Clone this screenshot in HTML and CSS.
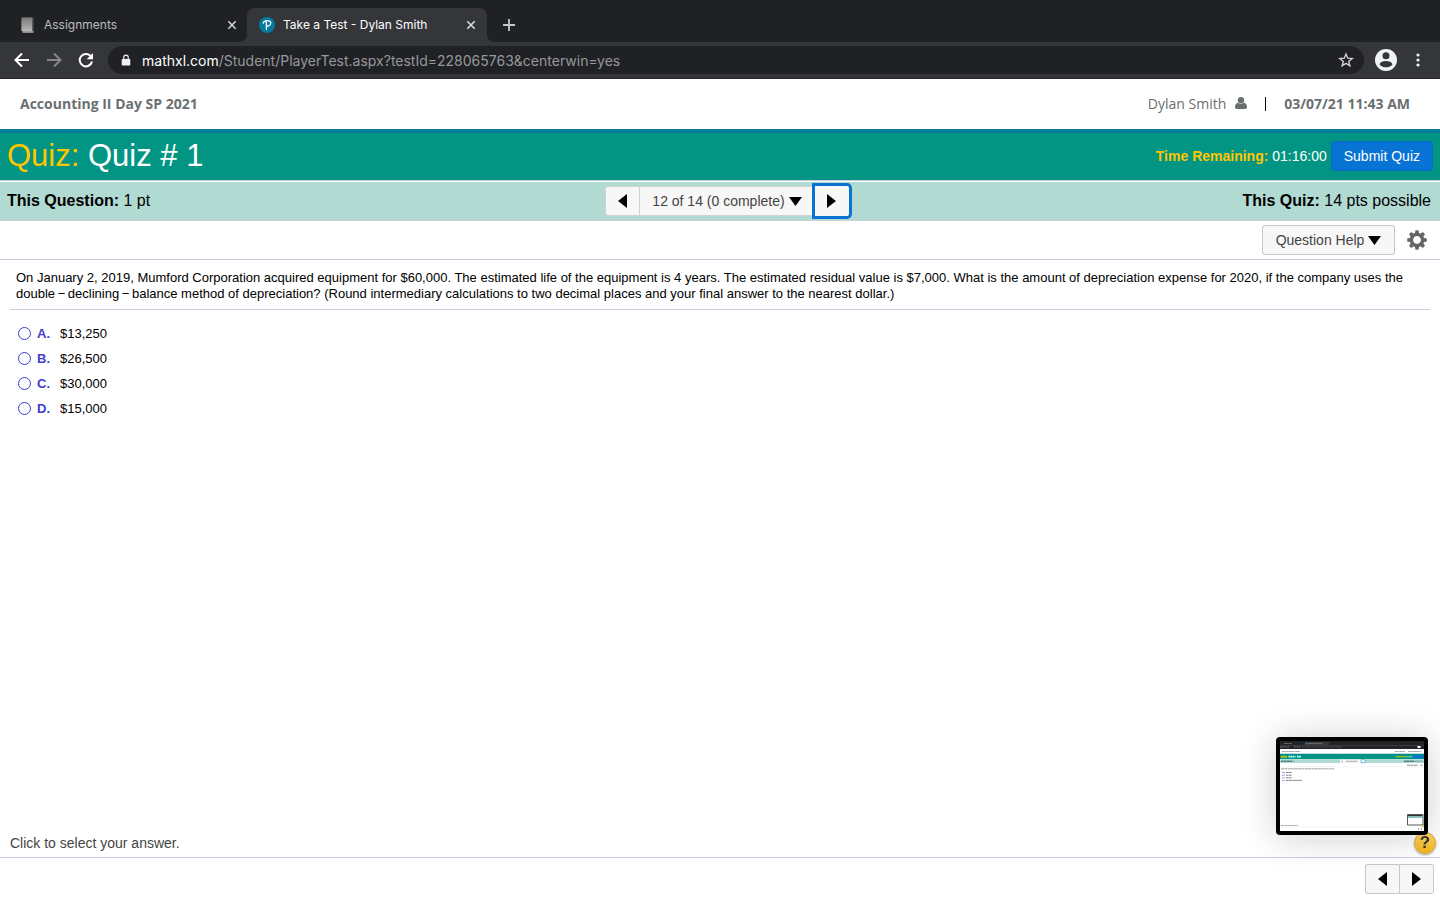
FILE: index.html
```html
<!DOCTYPE html>
<html lang="en">
<head>
<meta charset="utf-8">
<meta name="viewport" content="width=device-width, initial-scale=1">
<title>Take a Test - Dylan Smith</title>
<link rel="stylesheet" href="styles.css">
</head>
<body>
<div class="browser">
  <div class="tabs">
    <div class="tab">
      <svg class="tab-icon" viewBox="0 0 16 18" width="16" height="18" aria-hidden="true"><defs><linearGradient id="book" x1="0" y1="0" x2="0" y2="1"><stop offset="0" stop-color="#787878"/><stop offset="1" stop-color="#b8b8b8"/></linearGradient></defs><path d="M2 1.500h11.500v15H3.500L1.500 15V2.500z" fill="#5a5a5a"/><path d="M2.500 16h11" stroke="#ddd"/><path d="M1.500 1.500h10.500v13.500H1.500z" fill="url(#book)"/></svg>
      <span class="tab-title">Assignments</span>
      <button class="tab-close" aria-label="Close Assignments"><svg viewBox="0 0 10 10" width="10" height="10"><path d="M1.300 1.300l7.400 7.400M8.700 1.300l-7.400 7.400" stroke="currentColor" stroke-width="1.400"/></svg></button>
    </div>
    <div class="tab tab-active">
      <svg class="tab-icon" viewBox="0 0 16 16" width="16" height="16" aria-hidden="true"><circle cx="8" cy="8" r="8" fill="#047a9c"/><path d="M4.200 6.200C4.600 3.600 11.600 2.300 11.800 5.900 11.900 8.400 9.300 9.300 7.600 8.900M7.400 4.500V12.500" fill="none" stroke="#fff" stroke-width="1.300" stroke-linecap="round"/></svg>
      <span class="tab-title">Take a Test - Dylan Smith</span>
      <button class="tab-close" aria-label="Close Take a Test"><svg viewBox="0 0 10 10" width="10" height="10"><path d="M1.300 1.300l7.400 7.400M8.700 1.300l-7.400 7.400" stroke="currentColor" stroke-width="1.600"/></svg></button>
    </div>
    <button class="tab-new" aria-label="New tab"><svg viewBox="0 0 12 12" width="12" height="12"><path d="M6 0v12M0 6h12" stroke="currentColor" stroke-width="1.800"/></svg></button>
  </div>
  <div class="toolbar">
    <button class="tool" aria-label="Back"><svg viewBox="0 0 16 16" width="16" height="16"><path d="M15 8H2M8 1.500L1.500 8 8 14.500" fill="none" stroke="#fff" stroke-width="2"/></svg></button>
    <button class="tool" aria-label="Forward"><svg viewBox="0 0 16 16" width="16" height="16"><path d="M1 8h13M8 1.500L14.500 8 8 14.500" fill="none" stroke="#85868a" stroke-width="2"/></svg></button>
    <button class="tool" aria-label="Reload"><svg viewBox="0 0 16 16" width="16" height="16"><path d="M13.300 5A6.200 6.200 0 1 0 14 9.500" fill="none" stroke="#fff" stroke-width="2"/><path d="M15 1v6.300H8.700z" fill="#fff"/></svg></button>
    <div class="address">
      <svg viewBox="0 0 10 13" width="10" height="13" aria-hidden="true"><path d="M1.500 5h7a.8.8 0 0 1 .8.800v4.900a.8.8 0 0 1-.8.800h-7a.8.8 0 0 1-.8-.8V5.800A.8.8 0 0 1 1.500 5z" fill="#f1f1f1"/><path d="M2.800 5.500V3.300a2.200 2.200 0 0 1 4.400 0v2.200" fill="none" stroke="#f1f1f1" stroke-width="1.200"/></svg>
      <div class="url" role="textbox" tabindex="0" aria-label="Address"><span class="url-host">mathxl.com</span>/Student/PlayerTest.aspx?testId=228065763&amp;centerwin=yes</div>
      <button class="star" aria-label="Bookmark"><svg viewBox="0 0 16 16" width="16" height="16"><path d="M8 2l1.700 4.200 4.500.3-3.500 2.900 1.200 4.400L8 11.400l-3.900 2.400 1.200-4.400L1.800 6.500l4.500-.3z" fill="none" stroke="#d0d1d4" stroke-width="1.400"/></svg></button>
    </div>
    <button class="profile" aria-label="Profile"><svg viewBox="0 0 22 22" width="22" height="22"><circle cx="11" cy="11" r="11" fill="#f1f3f4"/><circle cx="11" cy="6.700" r="3.500" fill="#35363a"/><path d="M4.500 15.200c1.500-4.200 11.500-4.200 13 0-2.500 4.200-10.500 4.200-13 0z" fill="#35363a"/></svg></button>
    <button class="menu" aria-label="Menu"><svg viewBox="0 0 4 14" width="4" height="14" fill="#f1f3f4"><circle cx="2" cy="2" r="1.600"/><circle cx="2" cy="7" r="1.600"/><circle cx="2" cy="12" r="1.600"/></svg></button>
  </div>
</div>

<header class="course">
  <strong>Accounting II Day SP 2021</strong>
  <div class="course-user">
    <span>Dylan Smith</span>
    <svg viewBox="0 0 12 12" width="12" height="12" aria-hidden="true"><circle cx="6" cy="3.300" r="3.200" fill="#6a7070"/><path d="M3 5.800c1.800 1.500 4.200 1.500 6 0 2 .3 3 2 3 4.500 0 1-.6 1.700-1.700 1.700H1.700C.6 12 0 11.300 0 10.300 0 7.800 1 6.100 3 5.800z" fill="#6a7070"/></svg>
    <span class="divider"></span>
    <strong>03/07/21 11:43 AM</strong>
  </div>
</header>

<div class="titlebar">
  <h1 class="quiz-title"><span class="gold">Quiz:</span> Quiz # 1</h1>
  <div class="timer"><span><b class="gold">Time Remaining:</b> 01:16:00</span><button class="submit">Submit Quiz</button></div>
</div>

<div class="infobar">
  <div><b>This Question:</b> 1 pt</div>
  <nav class="pager" aria-label="Questions">
    <button class="pager-prev" aria-label="Previous question"><svg viewBox="0 0 9 14" width="9" height="14"><path d="M9 0v14L0 7z"/></svg></button>
    <button class="pager-list">12 of 14 (0 complete) <svg viewBox="0 0 13 9" width="13" height="9"><path d="M0 0h13L6.500 9z"/></svg></button>
    <button class="pager-next" aria-label="Next question"><svg viewBox="0 0 9 14" width="9" height="14"><path d="M0 0v14l9-7z"/></svg></button>
  </nav>
  <div class="points"><b>This Quiz:</b> 14 pts possible</div>
</div>

<div class="helpbar">
  <button class="help-btn">Question Help <svg viewBox="0 0 13 9" width="13" height="9"><path d="M0 0h13L6.500 9z"/></svg></button>
  <button class="gear" aria-label="Settings"><svg viewBox="-10 -10 20 20" width="20" height="20" fill="#666"><g id="teeth"><path id="tooth" d="M-2.200-6L-1.500-9.800h3L2.200-6z"/><use href="#tooth" transform="rotate(45)"/><use href="#tooth" transform="rotate(90)"/><use href="#tooth" transform="rotate(135)"/></g><use href="#teeth" transform="rotate(180)"/><circle r="5.600" fill="none" stroke="#666" stroke-width="3.400"/></svg></button>
</div>

<main class="question">
  <p class="prompt">On January 2, 2019, Mumford Corporation acquired equipment for $60,000. The estimated life of the equipment is 4 years. The estimated residual value is $7,000. What is the amount of depreciation expense for 2020, if the company uses the double&#8201;−&#8201;declining&#8201;−&#8201;balance method of depreciation? (Round intermediary calculations to two decimal places and your final answer to the nearest dollar.)</p>
  <div class="options" role="radiogroup" aria-label="Answers">
    <label class="option"><input type="radio" name="answer"><b>A.</b><span>$13,250</span></label>
    <label class="option"><input type="radio" name="answer"><b>B.</b><span>$26,500</span></label>
    <label class="option"><input type="radio" name="answer"><b>C.</b><span>$30,000</span></label>
    <label class="option"><input type="radio" name="answer"><b>D.</b><span>$15,000</span></label>
  </div>
</main>

<p class="hint">Click to select your answer.</p>
<footer class="footer">
  <button aria-label="Previous"><svg viewBox="0 0 9 14" width="9" height="14"><path d="M9 0v14L0 7z"/></svg></button>
  <button aria-label="Next"><svg viewBox="0 0 9 14" width="9" height="14"><path d="M0 0v14l9-7z"/></svg></button>
</footer>

<button class="help-badge" aria-label="Help">?</button>
<div class="preview">
  <svg viewBox="0 0 144 90" aria-hidden="true">
    <path d="M0 0h144v90H0z" fill="#fff"/>
    <path d="M0 0h144v8H0z" fill="#222327"/>
    <path d="M25 1h24v3h95v1H0V4h25z" fill="#393a3e"/>
    <path d="M4 2.500h8M28 2.500h14" stroke="#8c8d91" stroke-width=".7" stroke-dasharray="2 .4"/>
    <path d="M25.500 2.500h1.500" stroke="#0899bd" stroke-width="1.500"/>
    <path d="M0 6h10M14 6h7" stroke="#aaa" stroke-width=".7" stroke-dasharray="1.500 1"/>
    <path d="M22 6h40" stroke="#666" stroke-width=".7" stroke-dasharray="2 .4"/>
    <path d="M137.500 6h3" stroke="#fff" stroke-width="2"/>
    <path d="M2 10.500h18M115 10.500h10M128 10.500h13" stroke="#8c9090" stroke-width=".8" stroke-dasharray="2 .3"/>
    <path d="M0 13h144v5.200H0z" fill="#029583"/><path d="M0 12.700h144v.6H0z" fill="#047a9c"/>
    <path d="M1 15.700h6" stroke="#d6bd00" stroke-width="2" stroke-dasharray="1.800 .3"/>
    <path d="M8.500 15.700h7M17 15.700h2M20 14.700v2" stroke="#c4fff5" stroke-width="1.700" stroke-dasharray="1.700 .4"/>
    <path d="M115.500 15.700h11" stroke="#d6bd00"/><path d="M127 15.700h5.500" stroke="#a5ddd5" stroke-width=".8"/><path d="M133 14.300h10v3h-10z" fill="#0873d5"/>
    <path d="M0 18.500h144V22H0z" fill="#b1dad3"/>
    <path d="M1 20.200h11M124 20.200h10" stroke="#173d39" stroke-width=".9" stroke-dasharray="2.500 .3"/><path d="M12.500 20.200h2M134 20.200h9" stroke="#679990" stroke-width=".8"/>
    <path d="M60 18.700h25v3H60z" fill="#fff"/><path d="M66 20.200h12M61.500 20.200h1.500" stroke="#777" stroke-width=".8" stroke-dasharray="2 .4"/>
    <rect x="81" y="18.700" width="4" height="3" rx=".4" fill="#fff" stroke="#469bdc" stroke-width=".7"/>
    <path d="M127 24.200h11M140.500 24.200h2" stroke="#888" stroke-width="1" stroke-dasharray="3 .4"/>
    <path d="M0 25.900h144" stroke="#e4e6e9" stroke-width=".4"/>
    <path d="M1 27.800h53" stroke="#777" stroke-width=".7" stroke-dasharray="3 .4"/>
    <g stroke-width=".8"><path d="M2 31.500h3M2 34.200h3M2 36.800h3M2 39.400h3" stroke="#8989e8"/><path d="M6 31.500h6M6 34.200h6M6 36.800h6M6 39.400h16" stroke="#666" stroke-dasharray="2.500 .3"/></g>
    <path d="M1 84.500h17" stroke="#888" stroke-width=".7" stroke-dasharray="2 .3"/><path d="M0 86h144" stroke="#e4e6e9" stroke-width=".4"/>
    <path d="M127.500 73.500h15.500v10.500h-15.500z" fill="#fff" stroke="#444" stroke-width=".9"/><path d="M128 74h14.500v1.300H128z" fill="#333"/><path d="M128 75.300h14.500v1.500H128z" fill="#67b9ae"/>
    <path d="M142 85h2" stroke="#dfae35" stroke-width="1.500"/><path d="M138 88h1M141 88h1" stroke="#555"/>
  </svg>
</div>
</body>
</html>
```
FILE: styles.css
```css
* { box-sizing: border-box; }
body {
  margin: 0;
  min-height: 100vh;
  display: flex;
  flex-direction: column;
  background: #fff;
  color: #000;
  font-family: "Liberation Sans", Arial, sans-serif;
  font-size: 14px;
}
button {
  display: inline-flex;
  align-items: center;
  justify-content: center;
  padding: 0;
  border: 0;
  background: none;
  font: inherit;
  color: inherit;
}
svg { display: block; flex: none; }

.browser { background: #202124; font-family: Inter, sans-serif; }
.tabs { display: flex; align-items: flex-end; height: 42px; padding-left: 8px; }
.tab {
  display: flex;
  align-items: center;
  gap: 8px;
  width: 239px;
  height: 34px;
  padding: 0 10px 1px 12px;
  font-size: 12px;
  color: #b9bcc1;
}
.tab-title { flex: 1; white-space: nowrap; }
.tab-active {
  position: relative;
  width: 240px;
  padding-right: 11px;
  border-radius: 8px 8px 0 0;
  background: #35363a;
  color: #fff;
}
.tab-active::before,
.tab-active::after {
  content: "";
  position: absolute;
  bottom: 0;
  width: 8px;
  height: 8px;
}
.tab-active::before { left: -8px; background: radial-gradient(circle at 0 0, #202124 8px, #35363a 8px); }
.tab-active::after { right: -8px; background: radial-gradient(circle at 100% 0, #202124 8px, #35363a 8px); }
.tab-close { width: 10px; height: 20px; color: #dadce0; }
.tab-new { width: 44px; height: 34px; color: #c4c6ca; }
.toolbar {
  display: flex;
  align-items: center;
  height: 37px;
  padding: 0 12px 0 6px;
  border-bottom: 1px solid #242528;
  background: #35363a;
}
.tool { width: 32px; height: 28px; }
.address {
  flex: 1;
  display: flex;
  align-items: center;
  height: 28px;
  margin-left: 6px;
  padding: 0 10px 0 13px;
  border-radius: 14px;
  background: #202124;
}
.url { flex: 1; margin-left: 11px; color: #96989c; font-size: 14px; }
.url-host { color: #fff; }
.profile { width: 22px; margin-left: 11px; }
.menu { width: 20px; margin-left: 11px; }

.course {
  display: flex;
  align-items: center;
  justify-content: space-between;
  height: 50px;
  padding: 0 30px 2px 20px;
  color: #6a7070;
  font-family: "Open Sans", sans-serif;
}
.course-user { display: flex; align-items: center; }
.course-user svg { margin-left: 9px; }
.divider { width: 1px; height: 14px; margin: 2px 18px 0; background: #000; }

.titlebar {
  display: flex;
  align-items: center;
  justify-content: space-between;
  height: 51px;
  padding: 0 7px 2px;
  border-top: 4px solid #047a9c;
  background: #029583;
  color: #fff;
}
.quiz-title { margin: 0; font-size: 31px; font-weight: 400; line-height: 44px; }
.gold { color: #ffc600; }
.timer { display: flex; align-items: center; gap: 4px; }
.submit { height: 30px; padding: 0 12px; border: 1px solid #0869bd; border-radius: 3px; background: #0773d5; }

.infobar {
  display: grid;
  grid-template-columns: 1fr auto 1fr;
  align-items: center;
  height: 41px;
  padding: 1px 9px 0 7px;
  border-top: 1px solid #c9d0dc;
  border-bottom: 1px solid #c9d0dc;
  background: #b1dad3;
  box-shadow: inset 0 1px #fff;
  font-size: 16px;
}
.points { text-align: right; }
.pager { display: flex; align-items: center; margin-left: 18px; font-size: 14px; color: #444; }
.pager button { height: 30px; border: 1px solid #d2d2d2; background: #f7f7f7; }
.pager .pager-prev { width: 35px; border-radius: 3px 0 0 3px; }
.pager .pager-list { gap: 4px; width: 172px; padding-left: 3px; border-left: 0; border-right: 0; }
.pager .pager-next { width: 40px; height: 36px; border: 3px solid #0773d5; border-radius: 0 5px 5px 0; }
.pager svg, .help-btn svg { fill: #000; }

.helpbar {
  display: flex;
  align-items: center;
  justify-content: flex-end;
  gap: 12px;
  height: 39px;
  padding: 0 13px 0 0;
  border-bottom: 1px solid #c9cddc;
}
.help-btn { gap: 4px; width: 133px; height: 30px; border: 1px solid #c8c8c8; border-radius: 3px; background: #f7f7f7; color: #444; }

.question { flex: 1; padding: 10px; font-size: 13px; }
.prompt { margin: 0; padding: 0 6px 7px; border-bottom: 1px solid #c9cddc; line-height: 16px; }
.options { padding: 11px 8px; }
.option { display: flex; align-items: center; height: 25px; }
.option input { appearance: none; width: 13px; height: 13px; margin: 0 6px 0 0; border: 1px solid #3c3ccf; border-radius: 50%; background: #fff; }
.option input:checked { background: #3c3ccf; }
.option b { width: 23px; color: #4040d0; }

.hint { margin: 0; padding: 0 10px 6px; color: #444; line-height: 16px; }
.footer { display: flex; justify-content: flex-end; height: 43px; padding: 6px; border-top: 1px solid #c9cddc; }
.footer button { width: 35px; height: 30px; border: 1px solid #c8c8c8; border-radius: 0 3px 3px 0; background: #f7f7f7; }
.footer button:first-child { width: 34px; border-right: 0; border-radius: 3px 0 0 3px; }

.help-badge {
  position: fixed;
  right: 4px;
  bottom: 46px;
  width: 22px;
  height: 22px;
  border: 1px solid #d9a835;
  border-radius: 50%;
  background: linear-gradient(#ffd66b, #f5b716);
  box-shadow: 0 1px 2px #0006;
  color: #333;
  font-size: 17px;
  font-weight: 700;
}
.preview {
  position: fixed;
  right: 12px;
  bottom: 65px;
  width: 152px;
  padding: 4px;
  border-radius: 4px;
  background: #000;
  box-shadow: 0 2px 36px #0003;
}
```
